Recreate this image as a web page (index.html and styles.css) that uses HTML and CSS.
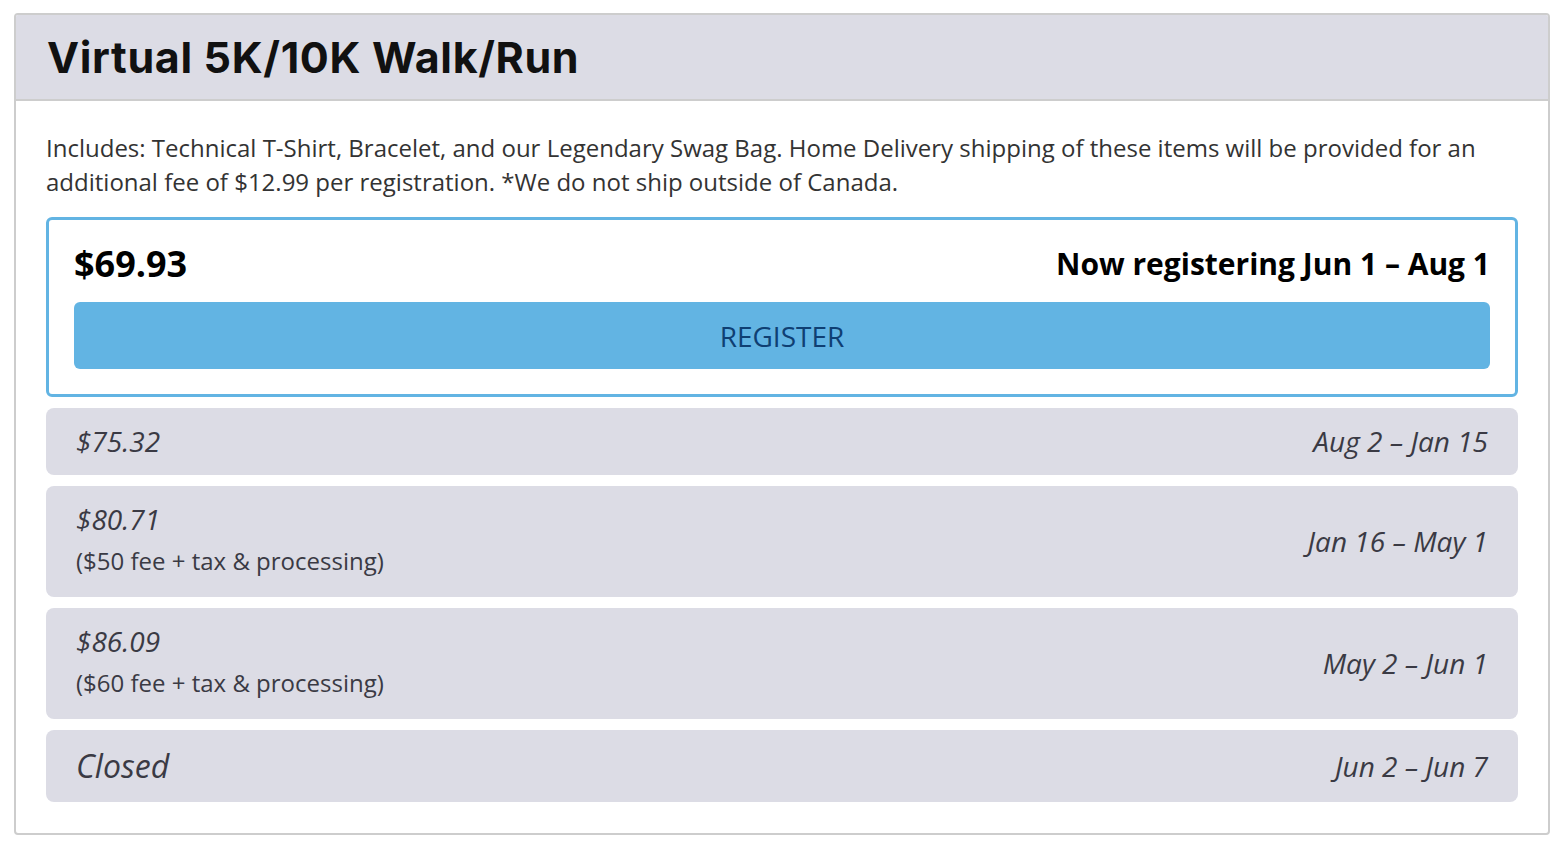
FILE: index.html
```html
<!DOCTYPE html>
<html lang="en">
<head>
    <meta charset="UTF-8">
    <meta name="viewport" content="width=device-width, initial-scale=1.0">
    <title>Virtual 5K/10K Walk/Run - Registration</title>
    <link rel="stylesheet" href="styles.css">
</head>
<body>

    <div class="event-card">
        <div class="event-header">
            <h2 class="event-title">Virtual 5K/10K Walk/Run</h2>
        </div>

        <div class="event-body">
            <p class="event-desc">Includes: Technical T-Shirt, Bracelet, and our Legendary Swag Bag. Home Delivery shipping of these items will be provided for an additional fee of $12.99 per registration. *We do not ship outside of Canada.</p>

            <!-- Current price tier -->
            <div class="tier-active">
                <div class="tier-active-top">
                    <span class="tier-active-price">$69.93</span>
                    <span class="tier-active-dates">Now registering Jun 1 &ndash; Aug 1</span>
                </div>
                <button class="btn-register">REGISTER</button>
            </div>

            <!-- Upcoming price tiers -->
            <div class="tier">
                <div class="tier-info">
                    <div class="tier-price">$75.32</div>
                </div>
                <div class="tier-dates">Aug 2 &ndash; Jan 15</div>
            </div>

            <div class="tier">
                <div class="tier-info">
                    <div class="tier-price">$80.71</div>
                    <div class="tier-note">($50 fee + tax &amp; processing)</div>
                </div>
                <div class="tier-dates">Jan 16 &ndash; May 1</div>
            </div>

            <div class="tier">
                <div class="tier-info">
                    <div class="tier-price">$86.09</div>
                    <div class="tier-note">($60 fee + tax &amp; processing)</div>
                </div>
                <div class="tier-dates">May 2 &ndash; Jun 1</div>
            </div>

            <div class="tier tier-closed">
                <div class="tier-info">
                    <div class="tier-price">Closed</div>
                </div>
                <div class="tier-dates">Jun 2 &ndash; Jun 7</div>
            </div>
        </div>
    </div>

</body>
</html>
```

FILE: styles.css
```css
/* General Styling */
body {
    font-family: "Open Sans", Arial, sans-serif;
    background-color: #fff;
    color: #333;
    margin: 0;
    padding: 13px 14px;
}

.event-card {
    border: 2px solid #cdcdcd;
    border-radius: 4px;
    overflow: hidden;
}

.event-header {
    background-color: #dcdce5;
    border-bottom: 2px solid #cdcdcd;
    height: 84px;
    padding: 0 31px;
    display: flex;
    align-items: center;
}

.event-title {
    font-family: Inter, Roboto, sans-serif;
    font-weight: 700;
    font-size: 43px;
    color: #111;
    margin: 0;
    letter-spacing: 0.65px;
}

.event-body {
    padding: 30px 30px 31px;
    display: flex;
    flex-direction: column;
    gap: 11px;
}

.event-desc {
    font-size: 24px;
    line-height: 34px;
    margin: 0 0 7px;
    color: #333;
}

/* Active tier */
.tier-active {
    border: 3px solid #62b4e3;
    border-radius: 6px;
    padding: 21px 25px 25px;
}

.tier-active-top {
    display: flex;
    justify-content: space-between;
    align-items: center;
    height: 44px;
    font-weight: 700;
    color: #000;
    margin-bottom: 17px;
}

.tier-active-price {
    font-size: 36px;
}

.tier-active-dates {
    font-size: 30px;
}

.btn-register {
    display: block;
    width: 100%;
    height: 67px;
    border: none;
    border-radius: 6px;
    background-color: #62b4e3;
    color: #0f3f73;
    font-family: "Open Sans", Arial, sans-serif;
    font-size: 28px;
    cursor: pointer;
}

.btn-register:hover {
    background-color: #4fa6d8;
}

/* Other tiers */
.tier {
    background-color: #dcdce5;
    border-radius: 8px;
    padding: 14px 30px;
    display: flex;
    justify-content: space-between;
    align-items: center;
    color: #3a3a44;
}

.tier-price,
.tier-dates {
    font-style: italic;
    font-size: 28px;
    line-height: 39px;
}

.tier-note {
    font-size: 24px;
    line-height: 34px;
    padding: 5px 0;
}

.tier-closed .tier-price {
    font-size: 32px;
    line-height: 44px;
}
```
